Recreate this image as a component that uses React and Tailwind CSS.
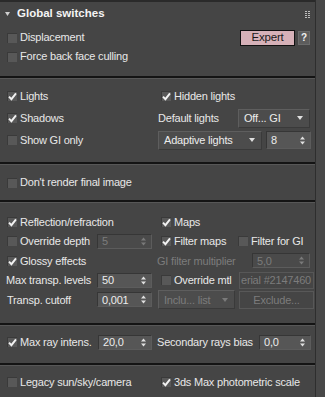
const font = { fontFamily: '"Liberation Sans", Arial, sans-serif' };

function Check({ on }) {
  return (
    <span className="w-[10px] h-[10px] shrink-0 bg-[#585858] border-t border-l border-[#3a3a3a] flex items-center justify-center">
      {on && (
        <svg width="9" height="9" viewBox="0 0 9 9">
          <path d="M1 4.6 L3.4 7.2 L8 1.3" stroke="#f2f2f2" strokeWidth="1.9" fill="none" />
        </svg>
      )}
    </span>
  );
}

function CheckRow({ on, label, className = "" }) {
  return (
    <div className={`flex items-center gap-[3px] ${className}`}>
      <Check on={on} />
      <span className="whitespace-nowrap">{label}</span>
    </div>
  );
}

function Arrows({ dim }) {
  const c = dim ? "#7a7a7a" : "#e0e0e0";
  return (
    <svg width="5" height="9" viewBox="0 0 5 9" className="shrink-0">
      <path d="M0 3.5 L2.5 0.5 L5 3.5 Z" fill={c} />
      <path d="M0 5.5 L2.5 8.5 L5 5.5 Z" fill={c} />
    </svg>
  );
}

function Spinner({ value, w, dim, h = "h-[15px]" }) {
  return (
    <div
      className={`${w} ${h} shrink-0 flex items-center justify-between pl-[4px] pr-[5px] border-t border-l border-[#363636] border-b border-r border-b-[#5c5c5c] border-r-[#5c5c5c] ${
        dim ? "bg-[#4a4a4a] text-[#7c7c7c]" : "bg-[#565656] text-[#ececec]"
      }`}
    >
      <span>{value}</span>
      <Arrows dim={dim} />
    </div>
  );
}

function Drop({ label, w, dim }) {
  return (
    <div
      className={`${w} h-[19px] shrink-0 flex items-center justify-between pl-[5px] pr-[6px] border border-[#5e5e5e] border-b-[#3a3a3a] border-r-[#3a3a3a] bg-[#4c4c4c] ${
        dim ? "text-[#7c7c7c]" : "text-[#ececec]"
      }`}
    >
      <span className="whitespace-nowrap">{label}</span>
      <svg width="6" height="4" viewBox="0 0 6 4">
        <path d="M0 0 L6 0 L3 4 Z" fill={dim ? "#7a7a7a" : "#e0e0e0"} />
      </svg>
    </div>
  );
}

function Sep() {
  return (
    <div className="shrink-0">
      <div className="h-[2px] bg-[#141414]" />
      <div className="h-px bg-[#575757]" />
    </div>
  );
}

function Row({ left, right, h = "h-[19.5px]" }) {
  return (
    <div className={`${h} flex items-center`}>
      <div className="w-[157px] shrink-0 flex items-center">{left}</div>
      <div className="flex-1 flex items-center min-w-0">{right}</div>
    </div>
  );
}

export default function App() {
  return (
    <div
      className="w-[325px] h-[397px] overflow-hidden bg-[#454545] text-[#e8e8e8] text-[11px] tracking-[-0.2px] flex"
      style={font}
    >
      <div className="w-[315px] shrink-0 flex flex-col border-t-2 border-[#2a2a2a]">
        {/* header */}
        <div className="h-[24px] flex items-center pl-[5px] pr-[5px]">
          <svg width="5" height="4" viewBox="0 0 5 4" className="mr-[7px]">
            <path d="M0 0 L5 0 L2.5 4 Z" fill="#cfcfcf" />
          </svg>
          <span className="font-bold text-[11.5px] text-[#f4f4f4] tracking-normal">Global switches</span>
          <div className="ml-auto grid grid-cols-2 gap-[1px]">
            {Array.from({ length: 8 }).map((_, i) => (
              <span key={i} className="w-[2px] h-[1px] bg-[#bdbdbd]" />
            ))}
          </div>
        </div>
        <div className="h-[50px] flex flex-col pt-[2px]">
          <div className="h-[19px] flex items-center pl-[7px] pr-[5px]">
            <CheckRow label="Displacement" />
            <div className="ml-auto flex items-center gap-[3px]">
              <div className="w-[55px] h-[16px] bg-[#d6b1b8] border border-[#111] text-[#1a1a1a] flex items-center justify-center text-[11.5px]">
                Expert
              </div>
              <div className="w-[12px] h-[14px] bg-[#5c5c5c] border border-[#6a6a6a] text-[#f0f0f0] font-bold text-[10px] flex items-center justify-center">
                ?
              </div>
            </div>
          </div>
          <div className="h-[19px] flex items-center pl-[7px]">
            <CheckRow label="Force back face culling" />
          </div>
        </div>
        <Sep />

        {/* lights */}
        <div className="h-[83px] pt-[6px] flex flex-col">
          <Row
            h="h-[22px]"
            left={<CheckRow on label="Lights" className="pl-[7px]" />}
            right={<CheckRow on label="Hidden lights" className="pl-[4px]" />}
          />
          <Row
            h="h-[22px]"
            left={<CheckRow on label="Shadows" className="pl-[7px]" />}
            right={
              <div className="flex items-center w-full pl-[1px]">
                <span className="w-[80px]">Default lights</span>
                <Drop label="Off... GI" w="w-[72px]" />
              </div>
            }
          />
          <Row
            h="h-[22px]"
            left={<CheckRow label="Show GI only" className="pl-[7px]" />}
            right={
              <div className="flex items-center gap-[4px] pl-[1px]">
                <Drop label="Adaptive lights" w="w-[104px]" />
                <Spinner value="8" w="w-[45px]" h="h-[18px]" />
              </div>
            }
          />
        </div>
        <Sep />

        <div className="h-[35px] flex items-center pl-[7px]">
          <CheckRow label="Don't render final image" />
        </div>
        <Sep />

        {/* raytracing */}
        <div className="h-[120px] pt-[9px] flex flex-col">
          <Row
            left={<CheckRow on label="Reflection/refraction" className="pl-[7px]" />}
            right={<CheckRow on label="Maps" className="pl-[4px]" />}
          />
          <Row
            left={
              <div className="flex items-center pl-[7px]">
                <div className="w-[90px]">
                  <CheckRow label="Override depth" />
                </div>
                <Spinner value="5" w="w-[55px]" dim />
              </div>
            }
            right={
              <div className="flex items-center pl-[4px]">
                <div className="w-[77px]">
                  <CheckRow on label="Filter maps" />
                </div>
                <CheckRow label="Filter for GI" />
              </div>
            }
          />
          <Row
            left={<CheckRow on label="Glossy effects" className="pl-[7px]" />}
            right={
              <div className="flex items-center">
                <span className="w-[95px] text-[#7c7c7c] whitespace-nowrap">GI filter multiplier</span>
                <Spinner value="5,0" w="w-[58px]" dim />
              </div>
            }
          />
          <Row
            left={
              <div className="flex items-center pl-[6px]">
                <span className="w-[91px] whitespace-nowrap">Max transp. levels</span>
                <Spinner value="50" w="w-[55px]" />
              </div>
            }
            right={
              <div className="flex items-center pl-[4px]">
                <div className="w-[78px]">
                  <CheckRow label="Override mtl" />
                </div>
                <div className="w-[75px] h-[17px] overflow-hidden flex items-center pl-[1px] border border-[#575757] text-[#7c7c7c] whitespace-nowrap">
                  erial #2147460
                </div>
              </div>
            }
          />
          <Row
            left={
              <div className="flex items-center pl-[7px]">
                <span className="w-[90px] whitespace-nowrap">Transp. cutoff</span>
                <Spinner value="0,001" w="w-[55px]" />
              </div>
            }
            right={
              <div className="flex items-center gap-[4px] pl-[1px]">
                <Drop label="Inclu... list" w="w-[77px]" dim />
                <div className="w-[75px] h-[18px] border border-[#585858] text-[#7c7c7c] flex items-center justify-center">
                  Exclude...
                </div>
              </div>
            }
          />
        </div>
        <Sep />

        <div className="h-[37px] pt-[6px]">
          <Row
            h="h-[20px]"
            left={
              <div className="flex items-center pl-[7px]">
                <div className="w-[91px]">
                  <CheckRow on label="Max ray intens." />
                </div>
                <Spinner value="20,0" w="w-[54px]" />
              </div>
            }
            right={
              <div className="flex items-center">
                <span className="w-[102px] whitespace-nowrap">Secondary rays bias</span>
                <Spinner value="0,0" w="w-[52px]" />
              </div>
            }
          />
        </div>
        <Sep />

        <div className="h-[31px] pt-[6px]">
          <Row
            h="h-[20px]"
            left={<CheckRow label="Legacy sun/sky/camera" className="pl-[7px]" />}
            right={<CheckRow on label="3ds Max photometric scale" className="pl-[4px]" />}
          />
        </div>
      </div>
      <div className="flex-1 border-l border-[#2e2e2e] bg-[#484848]" />
    </div>
  );
}
